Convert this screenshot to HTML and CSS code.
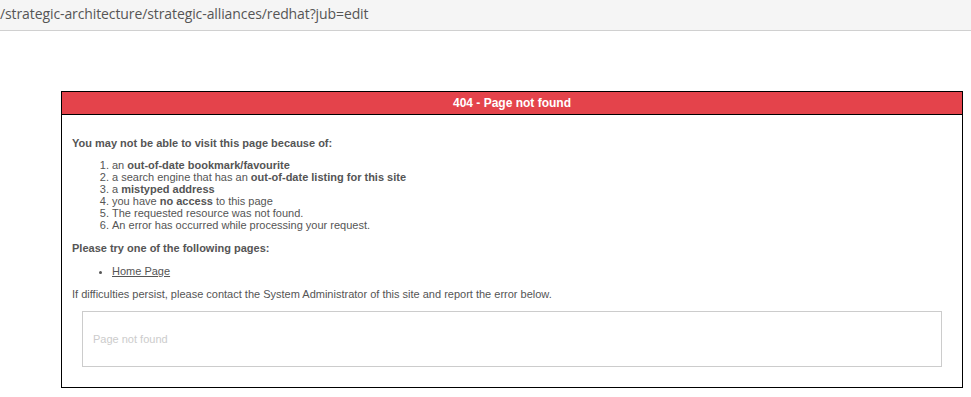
FILE: index.html
```html
<!DOCTYPE html>
<html lang="en">

<head>
    <meta charset="UTF-8">
    <title>404 - Page not found</title>
    <link rel="stylesheet" href="styles.css">
</head>

<body>
    <div class="urlbar">/strategic-architecture/strategic-alliances/redhat?jub=edit</div>

    <div class="error-box">
        <div class="error-title">404 - Page not found</div>
        <div class="error-body">
            <p class="lead"><strong>You may not be able to visit this page because of:</strong></p>
            <ol class="reasons">
                <li>an <strong>out-of-date bookmark/favourite</strong></li>
                <li>a search engine that has an <strong>out-of-date listing for this site</strong></li>
                <li>a <strong>mistyped address</strong></li>
                <li>you have <strong>no access</strong> to this page</li>
                <li>The requested resource was not found.</li>
                <li>An error has occurred while processing your request.</li>
            </ol>
            <p class="lead"><strong>Please try one of the following pages:</strong></p>
            <ul class="pages">
                <li><a href="#">Home Page</a></li>
            </ul>
            <p>If difficulties persist, please contact the System Administrator of this site and report the error below.</p>
            <div class="error-message">Page not found</div>
        </div>
    </div>
</body>

</html>
```

FILE: styles.css
```css
body {
    margin: 0;
    background-color: #fff;
    font-family: "Liberation Sans", Arial, sans-serif;
}

.urlbar {
    height: 30px;
    line-height: 28px;
    background-color: #f5f5f5;
    border-bottom: 1px solid #d0d0d0;
    color: #555;
    font-family: "Open Sans", "DejaVu Sans", sans-serif;
    font-size: 14px;
    letter-spacing: -0.1px;
    white-space: nowrap;
    overflow: hidden;
}

.error-box {
    width: 900px;
    margin: 60px 0 0 61px;
    border: 1px solid #000;
    color: #555;
    font-size: 11px;
}

.error-title {
    background-color: #e4434b;
    border-bottom: 1px solid #000;
    color: #fff;
    font-weight: bold;
    font-size: 12px;
    text-align: center;
    height: 22px;
    line-height: 22px;
}

.error-body {
    padding: 22px 10px 20px 10px;
}

.error-body p {
    margin: 0;
    line-height: 12px;
}

.reasons,
.pages {
    margin: 10px 0 11px 0;
    padding-left: 40px;
}

.reasons li,
.pages li {
    line-height: 12px;
}

.pages {
    margin: 11px 0 11px 0;
}

.pages a {
    color: #555;
}

.error-message {
    margin: 11px 10px 0 10px;
    border: 1px solid #ccc;
    height: 54px;
    line-height: 54px;
    padding: 0 10px;
    color: #ccc;
}
```
